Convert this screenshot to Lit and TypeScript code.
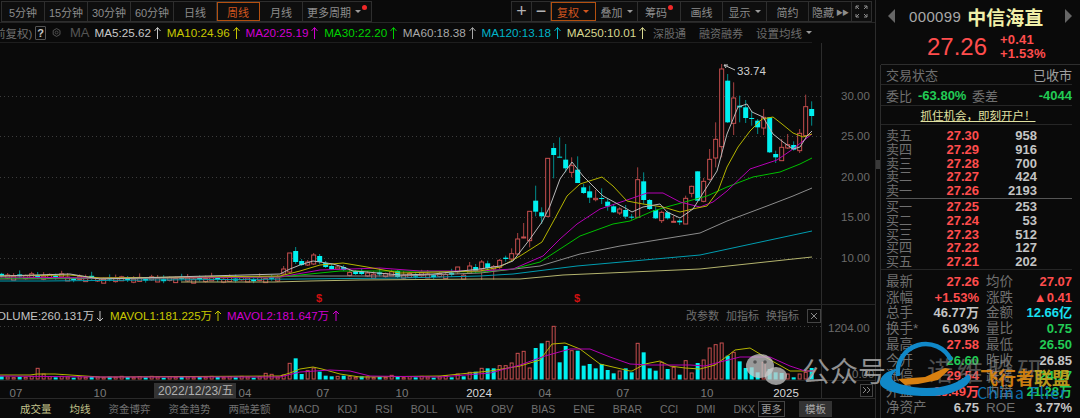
import { LitElement, html, css, svg } from "lit";
import { customElement } from "lit/decorators.js";

type Candle = [string, number, number, number, number]; // colour, body top, body bottom, wick top, wick bottom

const RED = "#c85050";
const CYAN = "#00f0f0";

const xAt = (k: number) => 1.67 + 6 * k;

// k 81-116, read off the chart
const midCandles: Candle[] = [
  ["c", 403, 417, 395, 430], ["r", 413, 420, 408, 452], ["r", 394, 415, 390, 420], ["c", 386, 390, 380, 398],
  ["r", 374, 390, 358, 395], ["r", 330, 375, 312, 378], ["r", 324, 327, 282, 328], ["r", 247, 335, 247, 355],
  ["c", 215, 248, 170, 262], ["c", 250, 262, 235, 285], ["r", 88, 262, 88, 265], ["c", 57, 78, 42, 148],
  ["c", 83, 85, 25, 85], ["c", 92, 118, 45, 130], ["r", 110, 130, 85, 145], ["c", 122, 162, 82, 162],
  ["c", 175, 192, 165, 195], ["c", 187, 206, 170, 222], ["r", 208, 212, 183, 217], ["c", 207, 210, 178, 225],
  ["c", 218, 232, 210, 245], ["c", 232, 250, 225, 252], ["r", 240, 252, 235, 258], ["c", 243, 263, 228, 270],
  ["c", 263, 266, 255, 272], ["r", 152, 265, 115, 265], ["c", 157, 213, 130, 225], ["c", 213, 240, 210, 243],
  ["c", 243, 268, 232, 270], ["r", 250, 275, 245, 282], ["c", 250, 268, 245, 272], ["r", 277, 280, 260, 280],
  ["c", 275, 280, 270, 288], ["r", 208, 285, 200, 285], ["r", 172, 193, 170, 205], ["c", 127, 215, 127, 215],
].map(([c, a, b, d, e]) => [c, 130 + (a as number) / 3, 130 + (b as number) / 3, 130 + (d as number) / 3, 130 + (e as number) / 3] as Candle);

// k 117-135
const lastCandles: Candle[] = [
  ["r", 382, 442, 372, 445], ["r", 316, 376, 285, 380], ["r", 256, 312, 205, 340], ["r", 45, 278, 30, 310],
  ["c", 80, 205, 60, 207], ["r", 132, 208, 85, 243], ["c", 155, 160, 125, 205], ["c", 160, 192, 138, 207],
  ["c", 192, 195, 170, 215], ["c", 200, 220, 195, 240], ["r", 190, 222, 165, 243], ["c", 190, 295, 190, 297],
  ["c", 300, 310, 290, 327], ["r", 280, 320, 255, 320], ["r", 272, 282, 240, 285], ["c", 273, 287, 262, 290],
  ["r", 238, 290, 225, 297], ["r", 158, 245, 122, 250], ["c", 165, 186, 142, 215],
].map(([c, a, b, d, e]) => [c, 55 + (a as number) / 3, 55 + (b as number) / 3, 55 + (d as number) / 3, 55 + (e as number) / 3] as Candle);

// k 0-80 is mostly flat, with the bump around k 48
const bump: Record<number, Candle> = {
  47: ["r", 270, 275, 267, 276], 48: ["r", 254, 273, 254, 274], 49: ["c", 252, 263, 248, 265],
  50: ["c", 262, 266, 260, 267], 51: ["r", 263, 266, 261, 267], 52: ["r", 256, 265, 254, 266],
  53: ["c", 257, 263, 255, 265], 54: ["c", 264, 268, 262, 269], 55: ["c", 267, 270, 265, 271],
  56: ["r", 268, 270, 266, 271], 57: ["c", 268, 271, 266, 272], 59: ["c", 272, 275, 271, 276],
  60: ["c", 272, 275, 270, 276], 66: ["c", 272, 278, 271, 279], 76: ["r", 268, 273, 268, 275],
  78: ["r", 267, 274, 263, 275], 79: ["c", 268, 272, 265, 274], 80: ["r", 263, 270, 261, 281],
};

function earlyCandle(k: number): Candle {
  if (bump[k]) return bump[k];
  const base = k < 11 ? 276 : k < 16 ? 278 : k < 47 ? 279 : k < 66 ? 274 : 275;
  const wob = ((k * 7) % 5) - 2;
  const col = (k * 5) % 3 === 0 ? "c" : "r";
  const top = base + wob * 0.6;
  return [col, top, top + 2 + (k % 3), top - 1 - (k % 4), top + 4];
}

const candles: Candle[] = [];
for (let k = 0; k <= 80; k++) candles.push(earlyCandle(k));
candles.push(...midCandles, ...lastCandles);

const ma: [string, number[]][] = [
  ["#b4b46e", [181, 283, 275, 283, 310, 282, 360, 281, 480, 280, 520, 280, 563, 276, 700, 270, 812, 258]],
  ["#009db0", [0, 282, 45, 282, 150, 281, 300, 280, 400, 279, 480, 277, 513, 275, 577, 267, 700, 256, 812, 232]],
  ["#8c8c8c", [0, 280, 200, 279, 300, 277, 400, 277, 480, 274, 540, 267, 580, 255, 620, 247, 700, 234, 727, 222, 767, 207, 793, 197, 812, 189]],
  ["#00c000", [0, 279, 100, 279, 280, 278, 340, 272, 400, 272, 480, 273, 513, 270, 540, 263, 560, 250, 580, 237, 613, 225, 630, 222, 653, 212, 670, 207, 707, 197, 727, 188, 753, 178, 780, 173, 800, 165, 812, 159]],
  ["#b400b4", [0, 278, 100, 279, 280, 278, 320, 271, 380, 269, 420, 272, 480, 272, 513, 270, 543, 257, 560, 240, 577, 225, 600, 210, 627, 201, 647, 194, 663, 194, 680, 203, 700, 208, 713, 203, 727, 192, 750, 170, 777, 161, 793, 150, 812, 135]],
  ["#b4b400", [0, 277, 70, 276, 100, 279, 280, 277, 300, 272, 320, 266, 343, 264, 367, 268, 400, 274, 480, 272, 500, 268, 520, 257, 542, 243, 553, 223, 567, 197, 580, 185, 602, 178, 613, 187, 627, 202, 643, 205, 663, 208, 680, 213, 697, 209, 707, 207, 718, 192, 727, 168, 738, 148, 750, 132, 762, 120, 773, 118, 782, 125, 793, 134, 803, 138, 812, 135]],
  ["#b8b8b8", [0, 277, 70, 275, 100, 280, 280, 275, 290, 270, 300, 266, 313, 262, 320, 263, 333, 265, 343, 268, 353, 272, 367, 273, 400, 276, 433, 275, 480, 270, 500, 267, 513, 262, 530, 240, 542, 223, 550, 207, 560, 180, 572, 163, 583, 177, 603, 197, 627, 210, 632, 213, 643, 208, 660, 205, 667, 213, 680, 219, 693, 210, 698, 202, 717, 172, 727, 135, 738, 108, 747, 105, 752, 113, 763, 118, 773, 135, 783, 143, 793, 150, 800, 148, 807, 137, 812, 132]],
];

// volume bar tops, k 74-135; the bars stand on y 380
const volTail: [string, number][] = [
  ["r", 230], ["c", 235], ["r", 225], ["c", 232], ["r", 220], ["c", 218], ["r", 208], ["c", 208], ["c", 208], ["r", 200],
  ["r", 200], ["r", 192], ["r", 163], ["r", 157], ["r", 207], ["c", 147], ["c", 133], ["r", 127], ["r", 82], ["c", 190],
  ["c", 141], ["r", 155], ["c", 155], ["c", 200], ["c", 195], ["c", 208], ["c", 195], ["c", 213], ["c", 223], ["r", 216],
  ["c", 208], ["c", 220], ["r", 133], ["c", 160], ["c", 208], ["c", 215], ["r", 190], ["c", 210], ["r", 205], ["c", 227],
  ["r", 185], ["r", 222], ["c", 192], ["r", 183], ["r", 147], ["r", 137], ["r", 132], ["c", 170], ["r", 160], ["c", 187],
  ["c", 207], ["c", 205], ["c", 220], ["r", 190], ["c", 210], ["c", 220], ["c", 222], ["r", 225], ["c", 235], ["r", 225],
  ["r", 220], ["c", 207],
];
const volEarly: Record<number, [string, number]> = {
  6: ["r", 208], 7: ["r", 225], 44: ["r", 223], 45: ["r", 226], 47: ["r", 228], 48: ["r", 193], 49: ["c", 178], 50: ["c", 225],
  51: ["r", 215], 52: ["r", 207], 53: ["c", 218], 54: ["c", 230], 55: ["c", 232], 56: ["r", 232], 57: ["c", 230], 65: ["r", 229],
};
const vols: [string, number][] = [];
for (let k = 0; k < 74; k++) {
  vols.push(volEarly[k] ?? [(k * 5) % 3 === 0 ? "c" : "r", 232 + ((k * 7) % 5)]);
}
vols.push(...volTail);
const volY = (z: number) => 300 + z / 3;

const volYellow = [0, 376, 30, 376, 37, 375, 55, 375, 100, 378, 280, 377, 290, 374, 300, 370, 313, 368, 322, 370, 340, 375, 360, 378, 440, 377, 490, 372, 520, 367, 540, 361, 552, 345, 565, 344, 580, 350, 600, 365, 630, 372, 632, 372, 645, 365, 660, 362, 670, 367, 685, 369, 700, 370, 715, 366, 730, 355, 735, 351, 750, 349, 765, 358, 790, 372, 815, 372];
const volMagenta = [0, 377, 100, 378, 280, 378, 300, 373, 330, 371, 350, 372, 370, 377, 440, 378, 490, 374, 520, 366, 545, 357, 570, 350, 590, 350, 610, 358, 630, 365, 650, 366, 690, 366, 705, 367, 720, 363, 740, 358, 770, 358, 790, 367, 805, 372, 815, 372];

const pts = (a: number[]) => {
  const out: string[] = [];
  for (let i = 0; i < a.length; i += 2) out.push(`${a[i]},${a[i + 1]}`);
  return out.join(" ");
};

const book = [
  ["卖五", "27.30", "958"], ["卖四", "27.29", "916"], ["卖三", "27.28", "700"], ["卖二", "27.27", "424"], ["卖一", "27.26", "2193"],
];
const book2 = [
  ["买一", "27.25", "253"], ["买二", "27.24", "53"], ["买三", "27.23", "512"], ["买四", "27.22", "127"], ["买五", "27.21", "202"],
];
const stats: [string, string, string, string, string, string][] = [
  ["最新", "27.26", "red", "均价", "27.07", "red"],
  ["涨幅", "+1.53%", "red", "涨跌", "▲0.41", "red"],
  ["总手", "46.77万", "gray", "金额", "12.66亿", "cyan"],
  ["换手*", "6.03%", "gray", "量比", "0.75", "green"],
  ["最高", "27.58", "red", "最低", "26.50", "green"],
  ["今开", "26.60", "green", "昨收", "26.85", "gray"],
  ["涨停", "29.54", "red", "跌停", "24.17", "green"],
  ["外盘", "25.49万", "red", "内盘", "21.28万", "green"],
  ["净资产", "6.75", "gray", "ROE", "3.77%", "gray"],
];

const maItems: [string, string][] = [
  ["MA5:25.62", "#c8c8c8"],
  ["MA10:24.96", "#c8c800"],
  ["MA20:25.19", "#d000d0"],
  ["MA30:22.20", "#00d000"],
  ["MA60:18.38", "#a8a8a8"],
  ["MA120:13.18", "#00b4c8"],
  ["MA250:10.01", "#d8d890"],
];

const periods = ["5分钟", "15分钟", "30分钟", "60分钟", "日线", "周线", "月线"];
const tabs = ["成交量", "均线", "资金博弈", "资金趋势", "两融差额", "MACD", "KDJ", "RSI", "BOLL", "WR", "OBV", "BIAS", "ENE", "BRAR", "CCI", "DMI", "DKX"];

@customElement("app-root")
export class AppRoot extends LitElement {
  static styles = css`
    :host {
      display: block;
      width: 1080px;
      height: 418px;
      overflow: hidden;
      position: relative;
      background: #0a0a0a;
      font-family: "Liberation Sans", "Noto Sans CJK SC", sans-serif;
      font-size: 13px;
      color: #8a8a8a;
    }
    .wrap { display: flex; height: 418px; }
    .left { width: 876px; flex: none; display: flex; flex-direction: column; border-right: 1px solid #2c2c2c; box-sizing: border-box; }

    .toolbar { display: flex; justify-content: space-between; height: 23px; box-sizing: border-box; padding: 1px 3px 0 1px; border-bottom: 1px solid #262626; }
    .group { display: flex; height: 21px; border: 1px solid #2e2e2e; box-sizing: border-box; background: #0e0e0e; }
    .tb { display: flex; align-items: center; justify-content: center; border-right: 1px solid #2e2e2e; box-sizing: border-box; color: #8c8c8c; font-size: 11px; white-space: nowrap; }
    .tb:last-child { border-right: 0; }
    .per { width: 43px; }
    .more { width: 68px; }
    .sel { outline: 1px solid #b4500f; outline-offset: -1px; color: #d2561e; }
    .car { margin-left: 4px; border: 3px solid transparent; border-top: 3px solid #9a9a9a; border-bottom: 0; }
    .sel .car { border-top-color: #d2561e; }
    .dot { width: 5px; height: 5px; margin: -8px 0 0 1px; border-radius: 50%; background: #f02828; }
    .sign { font-size: 18px; color: #b4b4b4; }
    .w20 { width: 20px; }
    .w19 { width: 19px; }
    .w42 { width: 42px; }
    .w43 { width: 43px; }
    .w44 { width: 44px; }
    .w45 { width: 45px; }
    .ff { margin-left: 2px; font-size: 7px; letter-spacing: -1px; }

    .mabar { display: flex; align-items: center; height: 21px; width: 818px; box-sizing: border-box; margin-left: -6px; white-space: nowrap; border-bottom: 1px solid #1e1e1e; font-size: 11.7px; }
    .adj { font-size: 11.5px; color: #707070; }
    .qm { width: 14px; height: 14px; margin: 0 6px 0 3px; border: 1px solid #555; border-radius: 1px; display: flex; align-items: center; justify-content: center; font-size: 11px; font-weight: 700; color: #c8c8c8; box-sizing: border-box; }
    .gear { margin-right: 9px; }
    .ma-label { color: #555; font-size: 13px; margin-right: 5px; }
    .ma-item { display: flex; align-items: center; }
    .ma-item svg { margin: 0 4.7px 0 2px; }
    .ma-links { display: flex; align-items: center; margin-left: 1px; gap: 13px; color: #6c6c6c; font-size: 11px; }
    .ma-links .set { display: flex; align-items: center; font-size: 11.5px; }

    .chart { display: block; flex: none; }
    .tabs { display: flex; align-items: center; height: 20px; padding-left: 20px; color: #6f6f6f; font-size: 10.5px; border-top: 1px solid #2a2a2a; box-sizing: border-box; white-space: nowrap; }
    .tabs span { margin-right: 18px; }
    .tabs .on { color: #c4c48c; }
    .tabs .morebtn { margin: 0 14px 0 -15px; padding: 0 2px; height: 14px; line-height: 14px; border: 1px solid #444; color: #999; }
    .tabs .tpl { margin: 0; padding: 0 6px; height: 16px; line-height: 16px; background: #333; color: #aaa; }

    .side { flex: 1; display: flex; flex-direction: column; min-width: 0; }
    .head { height: 65px; flex: none; margin-left: 5px; border-bottom: 1px solid #2e2e2e; box-sizing: border-box; }
    .title { display: flex; align-items: center; height: 32px; padding: 0 8px 0 7px; }
    .tri { width: 0; height: 0; border: 7px solid transparent; }
    .tri.l { border-right: 7px solid #666; border-left: 0; }
    .tri.r { border-left: 7px solid #666; border-right: 0; }
    .code { margin-left: 14px; font-size: 15px; letter-spacing: 0.35px; color: #a8a8a8; }
    .name { margin-left: 6px; font-size: 19px; font-weight: 700; color: #f0f0a8; flex: 1; }
    .quote { display: flex; height: 30px; align-items: center; padding-left: 46px; color: #ff4d4d; }
    .price { font-size: 24px; width: 73px; }
    .chg { font-size: 13px; font-weight: 700; line-height: 14px; letter-spacing: 0.2px; }

    .lower { flex: 1; display: flex; min-height: 0; }
    .rail { width: 4px; flex: none; border-right: 1px solid #2c2c2c; }
    .grip { width: 4px; height: 9px; margin-top: 95px; background: #3a3a3a; }
    .panel { flex: 1; min-width: 0; padding-right: 8px; }

    .status { display: flex; justify-content: space-between; align-items: center; height: 20px; padding: 0 0 0 5px; font-size: 13px; color: #707070; border-bottom: 1px solid #262626; box-sizing: border-box; }
    .status b { font-weight: 400; color: #a0a0a0; }
    .wei { display: grid; grid-template-columns: 33px 46px 31px 1fr; align-items: center; height: 21px; padding-left: 5px; font-size: 13px; color: #707070; border-bottom: 1px solid #262626; box-sizing: border-box; }
    .wei b { color: #22cc55; font-weight: 700; white-space: nowrap; }
    .wei .v1 { text-align: right; width: 47px; margin-left: -1px; }
    .wei .l2 { margin-left: 7px; white-space: nowrap; }
    .wei .v2 { text-align: right; }
    .promo { height: 19px; display: flex; align-items: center; justify-content: center; padding-left: 3px; color: #e0e0a0; font-size: 11.5px; text-decoration: underline; border-bottom: 1px solid #262626; box-sizing: border-box; }
    .book { padding: 4px 0 0 5px; border-bottom: 1px solid #262626; }
    .row { display: grid; grid-template-columns: 34px 59px 58px; height: 13.8px; line-height: 13.8px; }
    .row i { font-style: normal; font-size: 13px; color: #707070; white-space: nowrap; }
    .row b { text-align: right; font-weight: 700; font-size: 13px; }
    .rowsep { height: 1px; margin: 0 0 1px 0; background: #555; }
    .red { color: #ff4d4d; }
    .green { color: #22cc55; }
    .cyan { color: #18e0f0; }
    .gray { color: #c4c4c4; }
    .stats { padding: 4px 0 0 5px; }
    .srow { display: grid; grid-template-columns: 34px 59px 7px 34px 52px; height: 15.75px; line-height: 15.75px; white-space: nowrap; }
    .srow i { font-style: normal; font-size: 13.5px; color: #707070; }
    .srow b { text-align: right; font-weight: 700; font-size: 13px; }

    .mark { position: absolute; left: 0; top: 0; width: 1080px; height: 418px; pointer-events: none; font-family: "Noto Sans CJK SC", sans-serif; }
  `;

  private candle([c, top, bot, wt, wb]: Candle, k: number) {
    const x = xAt(k);
    const h = Math.max(bot - top, 1);
    if (c === "r") {
      return svg`<line x1=${x} x2=${x} y1=${wt} y2=${top} stroke="#a84242"></line>
        <line x1=${x} x2=${x} y1=${bot} y2=${wb} stroke="#a84242"></line>
        <rect x=${x - 2} y=${top} width="4" height=${h} fill="#0a0a0a" stroke=${RED}></rect>`;
    }
    return svg`<line x1=${x} x2=${x} y1=${wt} y2=${wb} stroke="#008c8c"></line>
      <rect x=${x - 2.5} y=${top} width="5" height=${h} fill=${CYAN}></rect>`;
  }

  private mainChart() {
    const grid = [[97, "30.00"], [137, "25.00"], [178, "20.00"], [218, "15.00"], [259, "10.00"]] as [number, string][];
    return html`<svg class="chart" width="875" height="263" viewBox="0 44 875 263">
      ${grid.map(([y, t]) => svg`
        <line x1="0" x2="821" y1=${y + 0.5} y2=${y + 0.5} stroke="#3c3c3c" stroke-dasharray="1 3"></line>
        <text x="841" y=${y + 4} font-size="11.5" fill="#6a6a6a">${t}</text>`)}
      <line x1="821.5" x2="821.5" y1="44" y2="307" stroke="#2c2c2c"></line>
      <line x1="0" x2="875" y1="305.5" y2="305.5" stroke="#262626"></line>
      ${candles.map((c, k) => this.candle(c, k))}
      ${ma.map(([col, a]) => svg`<polyline points=${pts(a)} fill="none" stroke=${col}></polyline>`)}
      <path d="M724 66 L735 71 M724 66 l4 0 M724 66 l2 3" stroke="#c8c8c8" fill="none"></path>
      <text x="737" y="76" font-size="11.5" fill="#d0d0d0">33.74</text>
      ${[319.5, 577.5].map((x) => svg`<text x=${x - 3.5} y="303" font-size="11" font-weight="700" fill="#d01010">$</text>`)}
    </svg>`;
  }

  private volChart() {
    const dates: [number, string, string][] = [
      [16, "07", "#7a7a7a"], [100, "10", "#7a7a7a"], [245, "04", "#7a7a7a"], [323, "07", "#7a7a7a"], [402, "10", "#7a7a7a"],
      [479, "2024", "#d8d8d8"], [545, "04", "#7a7a7a"], [623, "07", "#7a7a7a"], [707, "10", "#7a7a7a"], [786, "2025", "#d8d8d8"],
    ];
    return html`<svg class="chart" width="875" height="92" viewBox="0 307 875 92">
      <line x1="0" x2="821" y1="327.5" y2="327.5" stroke="#3c3c3c" stroke-dasharray="1 3"></line>
      <line x1="0" x2="875" y1="381.5" y2="381.5" stroke="#262626"></line>
      <line x1="821.5" x2="821.5" y1="307" y2="399" stroke="#2c2c2c"></line>
      ${vols.map(([c, z], k) => {
        const x = xAt(k);
        const y = volY(z);
        return c === "r"
          ? svg`<rect x=${x - 1.5} y=${y} width="3" height=${380 - y} fill="#0a0a0a" stroke=${RED}></rect>`
          : svg`<rect x=${x - 2} y=${y} width="4" height=${380.5 - y} fill=${CYAN}></rect>`;
      })}
      <polyline points=${pts(volYellow)} fill="none" stroke="#b4b400"></polyline>
      <polyline points=${pts(volMagenta)} fill="none" stroke="#b400b4"></polyline>

      <text x="-3" y="321" font-size="11.5" fill="#c4c4c4">OLUME:260.131万</text>
      <path d="M100 312 v10 M97 319 l3 3 l3 -3" stroke="#c4c4c4" fill="none"></path>
      <text x="110" y="321" font-size="11.5" fill="#c8c800">MAVOL1:181.225万</text>
      <path d="M218 322 v-10 M215 315 l3 -3 l3 3" stroke="#c8c800" fill="none"></path>
      <text x="227" y="321" font-size="11.5" fill="#d000d0">MAVOL2:181.647万</text>
      <path d="M336 322 v-10 M333 315 l3 -3 l3 3" stroke="#d000d0" fill="none"></path>

      <text x="686" y="321" font-size="11" fill="#6f6f6f">改参数</text>
      <text x="726" y="321" font-size="11" fill="#6f6f6f">加指标</text>
      <text x="766" y="321" font-size="11" fill="#6f6f6f">换指标</text>
      <rect x="807.5" y="310.5" width="13" height="13" fill="none" stroke="#444"></rect>
      <path d="M811 314 l6 6 M817 314 l-6 6" stroke="#888"></path>
      <text x="828" y="333" font-size="11.5" fill="#6a6a6a">1204.00</text>
      <text x="852" y="379" font-size="11.5" fill="#6a6a6a">0.00</text>

      ${dates.map(([x, t, col]) => svg`<text x=${x} y="398" text-anchor="middle" font-size="11.5" fill=${col}>${t}</text>`)}
      <rect x="154" y="384" width="82" height="15" fill="#333"></rect>
      <text x="158" y="396" font-size="12" fill="#b0b0b0">2022/12/23/五</text>
      <rect x="860.5" y="385.5" width="12" height="12" fill="none" stroke="#444"></rect>
      <path d="M863 388 l3 3 l-3 3 M867 388 l3 3 l-3 3" stroke="#888" fill="none"></path>
    </svg>`;
  }

  private arrow(col: string) {
    return html`<svg width="9" height="14" viewBox="0 0 9 14"><path d="M4.5 13V2M1.5 5l3-3.5 3 3.5" stroke=${col} fill="none"></path></svg>`;
  }

  render() {
    return html`
      <div class="wrap">
        <div class="left">
          <div class="toolbar">
            <div class="group">
              ${periods.map((p) => html`<div class="tb per ${p === "周线" ? "sel" : ""}">${p}</div>`)}
              <div class="tb more">更多周期<span class="car"></span><span class="dot"></span></div>
            </div>
            <div class="group">
              <div class="tb w20 sign">+</div>
              <div class="tb w19 sign">−</div>
              <div class="tb w45 sel">复权<span class="car"></span></div>
              <div class="tb w42">叠加<span class="car"></span></div>
              <div class="tb w43">筹码<span class="dot"></span></div>
              <div class="tb w42">画线</div>
              <div class="tb w44">显示<span class="car"></span></div>
              <div class="tb w42">简约</div>
              <div class="tb w43">隐藏<span class="ff">▶▶</span></div>
              <div class="tb w19">
                <svg width="13" height="13" viewBox="0 0 13 13"><path d="M1 4V1h3M9 1h3v3M1 9v3h3M12 9v3H9M1 1l3 3M12 1L9 4M1 12l3-3M12 12L9 9" stroke="#8c8c8c" fill="none"></path></svg>
              </div>
            </div>
          </div>
          <div class="mabar">
            <span class="adj">前复权)</span>
            <span class="qm">?</span>
            <svg class="gear" width="13" height="13" viewBox="0 0 14 14"><path d="M7 1l5.2 3v6L7 13 1.8 10V4z" fill="none" stroke="#555" stroke-width="1.5"></path><circle cx="7" cy="7" r="2.2" fill="none" stroke="#555" stroke-width="1.3"></circle></svg>
            <span class="ma-label">MA</span>
            ${maItems.map(([t, col]) => html`<span class="ma-item" style="color:${col}">${t}${this.arrow(col)}</span>`)}
            <div class="ma-links"><span>深股通</span><span>融资融券</span><span class="set">设置均线<span class="car"></span></span></div>
          </div>
          ${this.mainChart()}
          ${this.volChart()}
          <div class="tabs">
            ${tabs.map((t, i) => html`<span class=${i < 2 ? "on" : ""}>${t}</span>`)}
            <span class="morebtn">更多</span>
            <span class="tpl">模板</span>
          </div>
        </div>

        <div class="side">
          <div class="head">
            <div class="title">
              <span class="tri l"></span>
              <span class="code">000099</span>
              <span class="name">中信海直</span>
              <span class="tri r"></span>
            </div>
            <div class="quote">
              <span class="price">27.26</span>
              <div class="chg">+0.41<br />+1.53%</div>
            </div>
          </div>
          <div class="lower">
            <div class="rail"><div class="grip"></div></div>
            <div class="panel">
              <div class="status"><span>交易状态</span><b>已收市</b></div>
              <div class="wei">
                <span>委比</span><b class="v1">-63.80%</b><span class="l2">委差</span><b class="v2">-4044</b>
              </div>
              <div class="promo">抓住机会，即刻开户！</div>
              <div class="book">
                ${book.map(([a, b, c]) => html`<div class="row"><i>${a}</i><b class="red">${b}</b><b class="gray">${c}</b></div>`)}
                <div class="rowsep"></div>
                ${book2.map(([a, b, c]) => html`<div class="row"><i>${a}</i><b class="red">${b}</b><b class="gray">${c}</b></div>`)}
              </div>
              <div class="stats">
                ${stats.map(([a, b, bc, d, e, ec]) => html`<div class="srow"><i>${a}</i><b class=${bc}>${b}</b><span></span><i>${d}</i><b class=${ec}>${e}</b></div>`)}
              </div>
            </div>
          </div>
        </div>
      </div>

      <svg class="mark" viewBox="0 0 1080 418">
        <ellipse cx="760" cy="366" rx="14" ry="12" fill="#c8c8c8" opacity="0.75"></ellipse>
        <ellipse cx="776" cy="376" rx="11" ry="9" fill="#c8c8c8" opacity="0.75"></ellipse>
        <circle cx="755" cy="362" r="1.8" fill="#555"></circle>
        <circle cx="765" cy="362" r="1.8" fill="#555"></circle>
        <text x="802" y="382" font-size="28" fill="#a8a8a8" opacity="0.85">公众号</text>
        <text x="927" y="381" font-size="26" letter-spacing="4" fill="#8a8a8a" opacity="0.55">诺维股研</text>
        <path d="M898 376 A28 28 0 0 1 951 360" fill="none" stroke="#1088c8" stroke-width="4.5"></path>
        <path d="M880 381 C882 373 890 370 900 368 C890 374 888 380 900 384 C925 392 955 388 968 374 C978 382 955 397 927 396 C900 396 878 390 880 381 Z" fill="#1088c8"></path>
        <path d="M898 379 L925 377 L945 368 L950 369 L938 380 L918 384 L905 385 Z" fill="#d88010"></path>
        <text x="980" y="385" font-size="18" font-weight="700" fill="#e08a10" opacity="0.9">飞行者<tspan fill="#c8a820">联盟</tspan></text>
        <text x="977" y="399" font-size="16" letter-spacing="1" fill="#0e7ec4" opacity="0.9">China Flier</text>
      </svg>
    `;
  }
}
